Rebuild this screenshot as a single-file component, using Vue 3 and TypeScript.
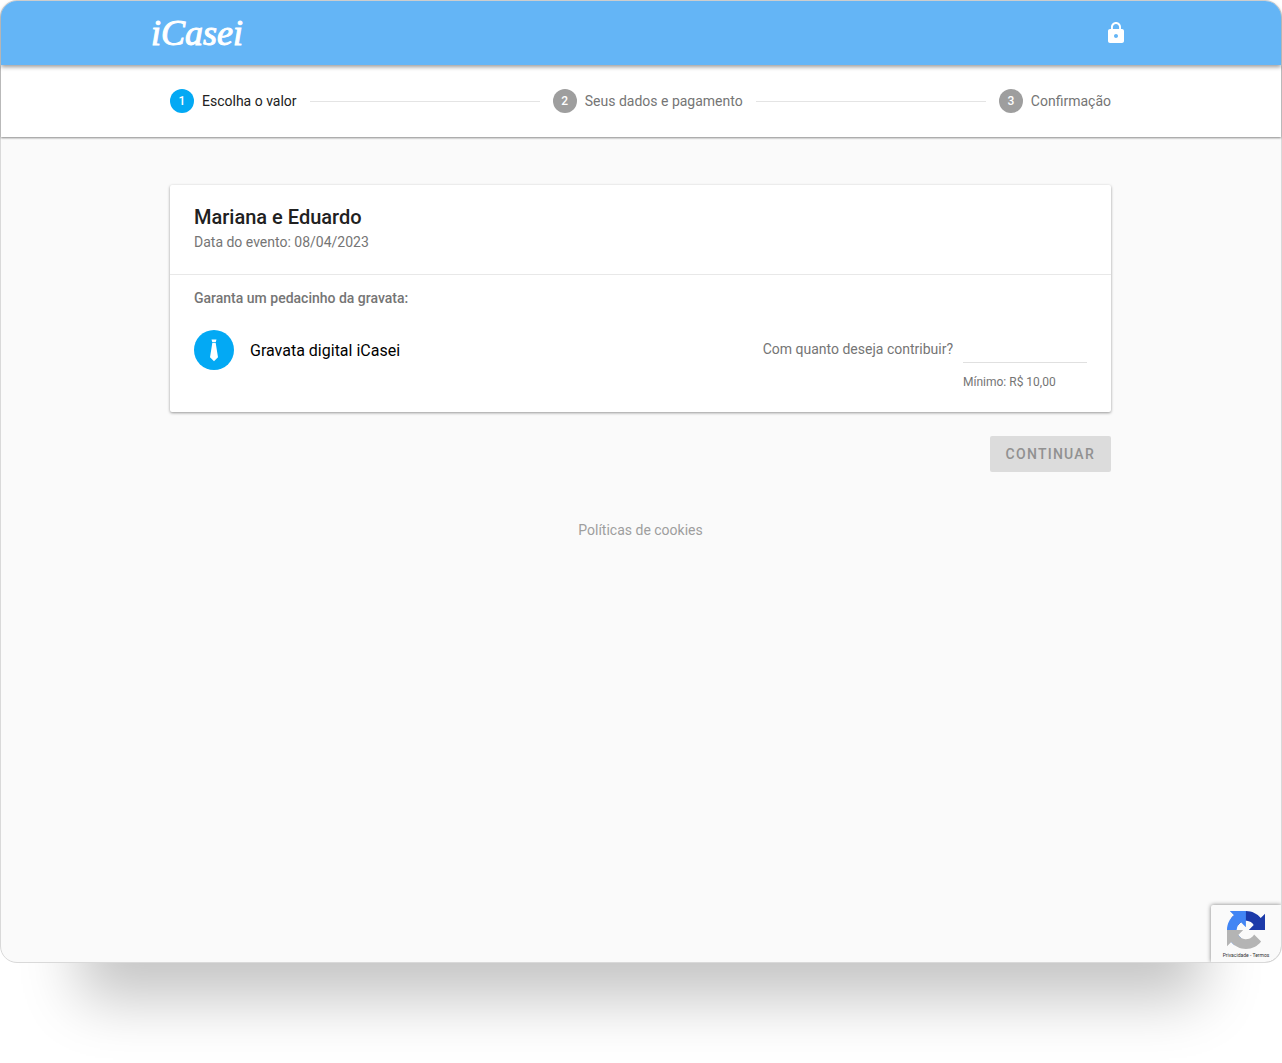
<script setup lang="ts">
import { ref } from 'vue'

interface Step {
  number: number
  label: string
}

const steps: Step[] = [
  { number: 1, label: 'Escolha o valor' },
  { number: 2, label: 'Seus dados e pagamento' },
  { number: 3, label: 'Confirmação' },
]
const current = ref(1)
const amount = ref('')
</script>

<template>
  <div class="window">
    <header class="topbar">
      <div class="topbar-inner">
        <a href="#" class="logo">iCasei</a>
        <svg class="lock" viewBox="0 0 24 24" aria-hidden="true">
          <path
            fill="#fff"
            d="M18 8h-1V6c0-2.760-2.240-5-5-5S7 3.240 7 6v2H6c-1.100 0-2 .9-2 2v10c0 1.100.9 2 2 2h12c1.100 0 2-.9 2-2V10c0-1.100-.9-2-2-2zm-6 9c-1.100 0-2-.9-2-2s.9-2 2-2 2 .9 2 2-.9 2-2 2zm3.100-9H8.900V6c0-1.710 1.390-3.100 3.100-3.100s3.100 1.390 3.100 3.100v2z"
          />
        </svg>
      </div>
    </header>

    <nav class="stepper">
      <ol class="steps">
        <template v-for="(step, i) in steps" :key="step.number">
          <li v-if="i > 0" class="connector" aria-hidden="true"></li>
          <li class="step" :class="{ active: step.number === current }">
            <span class="bullet">{{ step.number }}</span>
            <span>{{ step.label }}</span>
          </li>
        </template>
      </ol>
    </nav>

    <main class="content">
      <section class="card">
        <div class="card-head">
          <h1>Mariana e Eduardo</h1>
          <p>Data do evento: 08/04/2023</p>
        </div>
        <div class="card-body">
          <h2>Garanta um pedacinho da gravata:</h2>
          <div class="gift">
            <span class="avatar">
              <svg viewBox="0 0 40 40" aria-hidden="true">
                <path fill="#fff" d="M17.500 9.500h5l-.8 2.800h-3.400zM18.300 13h3.400l2.300 14.200-4 4-4-4z" />
              </svg>
            </span>
            <span class="gift-name">Gravata digital iCasei</span>
            <label class="question" for="amount">Com quanto deseja contribuir?</label>
            <div class="field">
              <input id="amount" v-model="amount" type="text" inputmode="decimal" aria-describedby="hint" />
              <span id="hint" class="hint">Mínimo: R$ 10,00</span>
            </div>
          </div>
        </div>
      </section>

      <div class="actions">
        <button type="button" disabled>CONTINUAR</button>
      </div>

      <footer class="footer"><a href="#">Políticas de cookies</a></footer>
    </main>

    <aside class="recaptcha">
      <svg viewBox="0 0 64 64" aria-hidden="true">
        <path
          fill="#1c3aa9"
          d="M64 31.955l-.033-1.370V4.687l-7.160 7.160C50.948 4.674 42.033.093 32.050.093c-10.400 0-19.622 4.960-25.458 12.640l11.736 11.860a15.550 15.550 0 0 1 4.754-5.334c2.050-1.600 4.952-2.906 8.968-2.906.485 0 .86.057 1.135.163 4.976.393 9.288 3.140 11.828 7.124l-8.307 8.307L64 31.953"
        />
        <path
          fill="#4285f4"
          d="M31.862.094l-1.370.033H4.594l7.160 7.160C4.580 13.147 0 22.060 0 32.046c0 10.400 4.960 19.622 12.640 25.458L24.500 45.768a15.550 15.550 0 0 1-5.334-4.754c-1.600-2.050-2.906-4.952-2.906-8.968 0-.485.057-.86.163-1.135.393-4.976 3.140-9.288 7.124-11.828l8.307 8.307L31.860.095"
        />
        <path
          fill="#b4b4b4"
          d="M.001 32.045l.033 1.370v25.898l7.160-7.160c5.860 7.173 14.774 11.754 24.760 11.754 10.400 0 19.622-4.960 25.458-12.640l-11.736-11.860a15.550 15.550 0 0 1-4.754 5.334c-2.050 1.600-4.952 2.906-8.968 2.906-.485 0-.86-.057-1.135-.163-4.976-.393-9.288-3.140-11.828-7.124l8.307-8.307L.001 32.045"
        />
      </svg>
      <p><a href="#">Privacidade</a> - <a href="#">Termos</a></p>
    </aside>
  </div>
</template>

<style>
body {
  margin: 0;
  background: #fff;
}
</style>

<style scoped>
.window {
  position: relative;
  box-sizing: border-box;
  min-height: calc(100vh - 100px);
  margin-bottom: 100px;
  border: 1px solid #d9d9d9;
  border-radius: 17px;
  background: #fafafa;
  box-shadow: 0 116px 56px -80px rgba(0, 0, 0, 0.23);
  font-family: Roboto, 'Liberation Sans', sans-serif;
  font-size: 14px;
  line-height: 20px;
  color: #757575;
}

a {
  color: inherit;
  text-decoration: none;
}

h1,
h2,
p,
ol {
  margin: 0;
  padding: 0;
}

.topbar {
  position: relative;
  z-index: 1;
  border-radius: 16px 16px 0 0;
  background: #64b5f6;
  box-shadow: 0 2px 4px rgba(0, 0, 0, 0.4);
}

.topbar-inner {
  display: flex;
  align-items: center;
  justify-content: space-between;
  max-width: 980px;
  height: 64px;
  margin: 0 auto;
}

.logo {
  font-family: 'Liberation Serif', serif;
  font-size: 36px;
  font-style: italic;
  line-height: 40px;
  color: #fff;
  -webkit-text-stroke: 1px #fff;
}

.lock {
  width: 24px;
  height: 24px;
  margin-right: 3px;
}

.stepper {
  background: #fff;
  box-shadow: 0 1px 2px rgba(0, 0, 0, 0.45);
}

.steps {
  display: flex;
  align-items: center;
  gap: 13px;
  max-width: 941px;
  height: 72px;
  margin: 0 auto;
  padding-right: 1px;
  list-style: none;
}

.step {
  display: flex;
  align-items: center;
  gap: 8px;
}

.step.active {
  color: #212121;
}

.bullet {
  width: 24px;
  border-radius: 50%;
  background: #9e9e9e;
  font-size: 12px;
  font-weight: 500;
  line-height: 24px;
  text-align: center;
  color: #fff;
}

.active .bullet {
  background: #03a9f4;
}

.connector {
  flex: 1;
  height: 1px;
  background: #e4e4e4;
}

.content {
  max-width: 941px;
  margin: 0 auto;
  padding-top: 48px;
  padding-right: 1px;
}

.card {
  border-radius: 2px;
  background: #fff;
  box-shadow: 0 1px 3px rgba(0, 0, 0, 0.4);
}

.card-head {
  padding: 20px 24px 20px;
  border-bottom: 1px solid #e8e8e8;
}

h1 {
  font-size: 20px;
  font-weight: 500;
  line-height: 25px;
  color: #212121;
}

.card-head p {
  line-height: 24px;
}

.card-body {
  padding: 12px 24px 20px;
}

h2 {
  font-size: 14px;
  font-weight: 500;
  line-height: 22px;
}

.gift {
  display: flex;
  align-items: flex-start;
  padding-top: 21px;
}

.avatar {
  width: 40px;
  height: 40px;
  margin-right: 16px;
  border-radius: 50%;
  background: #03a9f4;
}

.avatar svg {
  display: block;
}

.gift-name {
  font-size: 16px;
  line-height: 42px;
  color: #000;
}

.question {
  margin-left: auto;
  line-height: 38px;
}

.field {
  display: flex;
  flex-direction: column;
  width: 124px;
  margin-left: 10px;
}

.field input {
  box-sizing: border-box;
  width: 100%;
  height: 33px;
  padding: 0;
  border: 0;
  border-bottom: 1px solid #e0e0e0;
  outline: 0;
  background: transparent;
  font: inherit;
}

.hint {
  margin-top: 9px;
  font-size: 12px;
}

.actions {
  display: flex;
  justify-content: flex-end;
  padding-top: 24px;
}

button {
  height: 36px;
  padding: 0 16px;
  border: 0;
  border-radius: 2px;
  background: #dcdcdc;
  font: inherit;
  font-weight: 500;
  letter-spacing: 0.09em;
  color: #919191;
}

.footer {
  padding: 48px 0;
  text-align: center;
  color: #9e9e9e;
}

.recaptcha {
  position: absolute;
  right: 0;
  bottom: 0;
  box-sizing: border-box;
  width: 70px;
  height: 57px;
  padding-top: 6px;
  border-radius: 2px 0 16px 0;
  background: #fafafa;
  box-shadow: 0 0 4px rgba(0, 0, 0, 0.5);
  clip-path: inset(-6px 0 0 -6px round 0 0 16px 0);
  text-align: center;
}

.recaptcha svg {
  display: block;
  width: 38px;
  height: 38px;
  margin: 0 auto;
}

.recaptcha p {
  font-size: 5px;
  line-height: 12px;
  white-space: nowrap;
  color: #333;
}
</style>
